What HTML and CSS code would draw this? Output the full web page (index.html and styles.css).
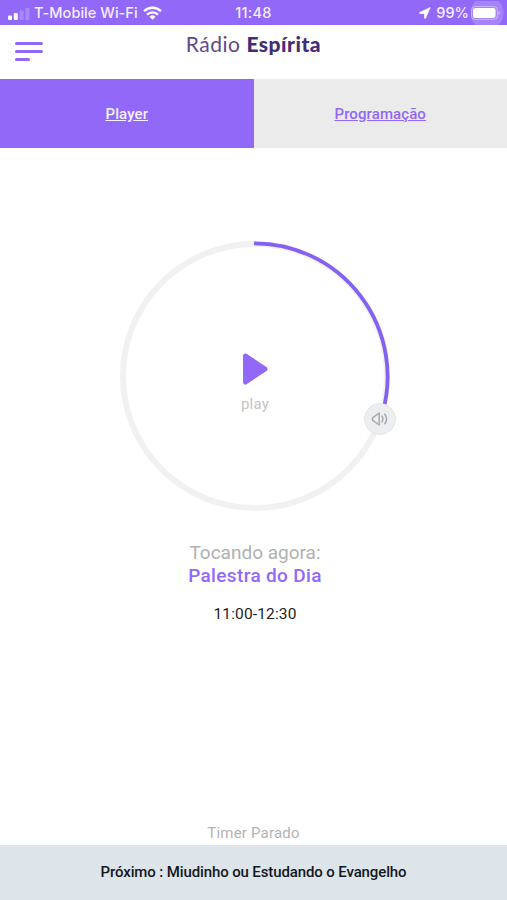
FILE: index.html
```
<!DOCTYPE html>
<html lang="pt-BR">
<head>
    <meta charset="UTF-8">
    <meta name="viewport" content="width=device-width, initial-scale=1.0">
    <title>Rádio Espírita</title>
    <link rel="stylesheet" href="styles.css">
</head>
<body>

    <div class="status-bar">
        <div class="status-left">
            <svg class="signal" width="22" height="12" viewBox="0 0 22 12" fill="#fff">
                <rect x="0" y="7.5" width="4" height="4.5" rx="1"/>
                <rect x="5.8" y="5" width="4" height="7" rx="1"/>
                <rect x="11.6" y="2.5" width="4" height="9.5" rx="1" opacity="0.22"/>
                <rect x="17.4" y="0" width="4" height="12" rx="1" opacity="0.22"/>
            </svg>
            <span class="carrier">T-Mobile Wi-Fi</span>
            <svg class="wifi" width="19" height="14" viewBox="0 0 19 14" fill="none" stroke="#fff" stroke-width="2.4">
                <path d="M1 5.2a12.2 12.2 0 0 1 17 0"/>
                <path d="M4 8.6a8 8 0 0 1 11 0"/>
                <path d="M9.5 13.8L6.5 10.8a4.3 4.3 0 0 1 6 0z" fill="#fff" stroke="none"/>
            </svg>
        </div>
        <div class="clock">11:48</div>
        <div class="status-right">
            <svg class="location" width="12" height="12" viewBox="0 0 12 12" fill="#fff">
                <path d="M11.2 0.6L0.6 5.5q-.5.7.3 1h4.6v4.6q.4.8 1 .2z" stroke="#fff" stroke-width="0.7" stroke-linejoin="round"/>
            </svg>
            <span class="percent">99%</span>
            <span class="battery-halo">
                <svg class="battery" width="29" height="14" viewBox="0 0 29 14">
                    <rect x="0.5" y="0.5" width="26" height="13" rx="3.8" fill="none" stroke="#fff" stroke-opacity="0.4"/>
                    <rect x="2" y="2" width="22.5" height="10" rx="2.2" fill="#fff"/>
                    <path d="M27.6 5q1.3.6 1.3 2t-1.3 2z" fill="#fff" opacity="0.5"/>
                </svg>
            </span>
        </div>
    </div>

    <header>
        <button class="menu-btn" aria-label="Menu">
            <span></span>
            <span></span>
            <span class="short"></span>
        </button>
        <h1 class="logo">Rádio <b>Espírita</b></h1>
    </header>

    <nav>
        <a href="#" class="tab active">Player</a>
        <a href="#" class="tab">Programação</a>
    </nav>

    <main>
        <div class="dial">
            <svg class="ring" width="284" height="284" viewBox="0 0 284 284" fill="none">
                <circle cx="142" cy="142" r="132" stroke="#f1f1f1" stroke-width="6"/>
                <path d="M141 9.3A133.2 133.2 0 0 1 269.5 179" stroke="#8461f1" stroke-width="3.8"/>
            </svg>
            <button class="play">
                <svg width="26" height="32" viewBox="0 0 26 32">
                    <path d="M3.5 3L23 16L3.5 29z" fill="#9168f7" stroke="#9168f7" stroke-width="5" stroke-linejoin="round"/>
                </svg>
                <span>play</span>
            </button>
            <div class="volume">
                <svg width="18" height="16" viewBox="0 0 18 16" fill="none" stroke="#a5abaf" stroke-width="1.5" stroke-linejoin="round" stroke-linecap="round">
                    <path d="M1.5 6.8v2.4L8.2 14V2z"/>
                    <path d="M11 5.2q1.9 2.8 0 5.6"/>
                    <path d="M13.8 3.2q3.6 4.8 0 9.6"/>
                </svg>
            </div>
        </div>

        <div class="now-playing">
            <p class="label">Tocando agora:</p>
            <p class="show">Palestra do Dia</p>
            <p class="time">11:00-12:30</p>
        </div>

        <p class="timer">Timer Parado</p>
    </main>

    <footer>Próximo : Miudinho ou Estudando o Evangelho</footer>

</body>
</html>
```
FILE: styles.css
```
* {
    box-sizing: border-box;
}

body {
    font-family: Roboto, sans-serif;
    margin: 0;
    height: 900px;
    display: flex;
    flex-direction: column;
    background-color: #fff;
    overflow: hidden;
}

p, h1 {
    margin: 0;
}

button {
    border: none;
    background: none;
    padding: 0;
    font-family: inherit;
    cursor: pointer;
}

.status-bar {
    height: 25px;
    background-color: #9168f7;
    color: #f5efff;
    font-family: Inter, sans-serif;
    font-size: 14.5px;
    font-weight: 500;
    line-height: 26px;
    display: grid;
    grid-template-columns: 1fr auto 1fr;
}

.status-left, .status-right {
    display: flex;
    align-items: center;
    height: 26px;
}

.status-left {
    padding-left: 8px;
}

.signal {
    margin-top: 2px;
}

.carrier {
    margin-left: 4px;
    letter-spacing: 0.05px;
}

.wifi {
    margin-left: 5px;
}

.clock {
    letter-spacing: 0.3px;
}

.status-right {
    justify-content: flex-end;
}

.percent {
    margin-left: 5px;
    margin-right: 2px;
}

.battery-halo {
    width: 36px;
    height: 25px;
    display: flex;
    align-items: center;
    background: radial-gradient(circle at 16px 12px, rgba(255, 255, 255, 0.18) 16px, transparent 17px);
}

header {
    height: 54px;
    flex: none;
    padding: 0 15px;
    display: grid;
    grid-template-columns: 1fr auto 1fr;
}

.menu-btn {
    width: 28px;
    height: 19px;
    margin-top: 17px;
    display: flex;
    flex-direction: column;
    justify-content: space-between;
}

.menu-btn span {
    width: 28px;
    height: 3px;
    border-radius: 2px;
    background-color: #9168f7;
}

.menu-btn .short {
    width: 15px;
}

.logo {
    margin-top: 4px;
    font-family: Lato, sans-serif;
    font-size: 21px;
    font-weight: 400;
    line-height: 30px;
    letter-spacing: 0.5px;
    color: #5d4a87;
}

.logo b {
    font-weight: 900;
    color: #432d76;
}

nav {
    display: flex;
    height: 69px;
    flex: none;
}

.tab {
    flex: 1;
    background-color: #ebebeb;
    color: #9168f7;
    font-size: 15px;
    font-weight: 500;
    line-height: 70px;
    letter-spacing: 0.1px;
    text-align: center;
}

.tab.active {
    background-color: #9168f7;
    color: #f5efff;
}

main {
    flex: 1;
    display: flex;
    flex-direction: column;
    align-items: center;
}

.dial {
    position: relative;
    width: 284px;
    height: 284px;
    margin-top: 86px;
    margin-left: 3px;
    display: flex;
    justify-content: center;
}

.ring {
    position: absolute;
    top: 0;
    left: 0;
}

.play {
    position: relative;
    margin-top: 119px;
    display: flex;
    flex-direction: column;
    align-items: center;
    font-size: 15px;
    line-height: 20px;
    color: #c4c4c4;
}

.play span {
    margin-top: 9px;
    letter-spacing: 0.2px;
}

.volume {
    position: absolute;
    left: 251px;
    top: 169px;
    width: 32px;
    height: 32px;
    border-radius: 50%;
    background-color: #eceef0;
    border: 1px solid #e3e5e7;
    display: flex;
    align-items: center;
    justify-content: center;
}

.now-playing {
    margin-top: 23px;
    text-align: center;
    margin-left: 3px;
}

.label {
    font-size: 19px;
    line-height: 23px;
    color: #b0b0b0;
}

.show {
    font-size: 19px;
    font-weight: 500;
    line-height: 23px;
    letter-spacing: 0.35px;
    color: #9168f7;
}

.time {
    margin-top: 17px;
    font-size: 15.5px;
    line-height: 20px;
    letter-spacing: 0.15px;
    color: #1c1c1c;
}

.timer {
    margin-top: auto;
    font-size: 15px;
    line-height: 24px;
    letter-spacing: 0.2px;
    color: #b3b3b3;
}

footer {
    height: 55px;
    flex: none;
    background-color: #dde5eb;
    color: #14171c;
    font-size: 15px;
    font-weight: 500;
    line-height: 54px;
    letter-spacing: -0.12px;
    text-align: center;
}
```
